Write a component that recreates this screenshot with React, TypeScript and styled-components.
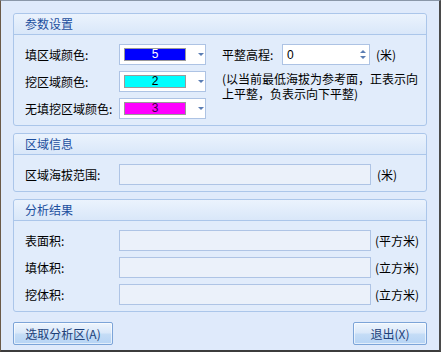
import styled, { createGlobalStyle } from 'styled-components'

const Global = createGlobalStyle`
    html, body {
        margin: 0;
        padding: 0;
        background: #dde9fa;
    }
    body {
        font-family: "Noto Sans CJK SC", "Noto Sans", sans-serif;
        font-size: 12px;
        color: #000;
    }
`

const Window = styled.div`
    width: 441px;
    height: 352px;
    box-sizing: border-box;
    border-left: 1px solid #6b5a48;
    border-top: 1px solid #8a97a8;
    border-right: 2px solid #4a4a4a;
    border-bottom: 2px solid #3c3c3c;
    background: #dfeafb;
    padding: 12px 12px 0 12px;
    display: flex;
    flex-direction: column;
    gap: 7px;
`

const Panel = styled.section`
    border: 1px solid #abc6ea;
    border-radius: 3px;
    background: #e1ecfb;
    display: flex;
    flex-direction: column;
`

const PanelHeader = styled.div`
    height: 20px;
    border-bottom: 1px solid #abc6ea;
    background: linear-gradient(#ebf3fd, #d9e7f9);
    color: #1d4f9e;
    line-height: 20px;
    padding-left: 11px;
    border-radius: 3px 3px 0 0;
`

const PanelBody = styled.div`
    padding: 9px 11px 6px 11px;
    display: flex;
    flex-direction: column;
    gap: 6px;
`

const ParamGrid = styled.div`
    display: flex;
    gap: 16px;
`

const ColorColumn = styled.div`
    display: flex;
    flex-direction: column;
    gap: 6px;
`

const Row = styled.div`
    display: flex;
    align-items: center;
    height: 21px;
`

const Label = styled.span<{ $width?: number }>`
    width: ${p => p.$width ?? 94}px;
    flex: none;
    white-space: nowrap;
`

const ColorSelect = styled.div`
    width: 87px;
    height: 21px;
    box-sizing: border-box;
    border: 1px solid #adc3e4;
    background: #fff;
    display: flex;
    align-items: center;
    padding-left: 4px;
    gap: 7px;
`

const Swatch = styled.div<{ $bg: string; $fg: string }>`
    width: 62px;
    height: 13px;
    box-sizing: border-box;
    border: 1px solid #9a9a9a;
    background: ${p => p.$bg};
    color: ${p => p.$fg};
    text-align: center;
    line-height: 11px;
    font-family: "Liberation Sans", sans-serif;
    font-size: 12px;
`

const DropArrow = styled.span`
    width: 0;
    height: 0;
    border-left: 3px solid transparent;
    border-right: 3px solid transparent;
    border-top: 3px solid #5a7db3;
    margin-left: 5px;
`

const RightColumn = styled.div`
    display: flex;
    flex-direction: column;
    gap: 6px;
`

const SpinBox = styled.div`
    width: 88px;
    height: 21px;
    box-sizing: border-box;
    border: 1px solid #adc3e4;
    background: #fff;
    display: flex;
    align-items: center;
    justify-content: space-between;
    padding: 0 3px 0 4px;
    font-family: "Liberation Sans", sans-serif;
`

const SpinArrows = styled.div`
    display: flex;
    flex-direction: column;
    gap: 3px;
`

const Tri = styled.span<{ $up?: boolean }>`
    width: 0;
    height: 0;
    border-left: 3px solid transparent;
    border-right: 3px solid transparent;
    ${p => (p.$up ? 'border-bottom: 3px solid #5a7db3;' : 'border-top: 3px solid #5a7db3;')}
`

const Unit = styled.span<{ $gap?: number }>`
    margin-left: ${p => p.$gap ?? 6}px;
    white-space: nowrap;
`

const Note = styled.div`
    display: flex;
    flex-direction: column;
`

const NoteLine = styled.span`
    line-height: 15px;
    white-space: nowrap;
`

const Field = styled.div`
    width: 252px;
    height: 21px;
    box-sizing: border-box;
    border: 1px solid #aec4e5;
    background: #ebf1fa;
    flex: none;
`

const Footer = styled.div`
    display: flex;
    justify-content: space-between;
    margin-top: 3px;
`

const Button = styled.button<{ $width: number }>`
    width: ${p => p.$width}px;
    height: 23px;
    border: 1px solid #7ca4d8;
    border-radius: 2px;
    background: linear-gradient(#eef5fd 0%, #dbe9fa 45%, #c4dcf6 55%, #b6d4f5 100%);
    color: #1d3f78;
    font-family: inherit;
    font-size: 12px;
    padding: 0;
    box-shadow: inset 0 0 0 1px rgba(255, 255, 255, 0.6);
`

const colors = [
    { label: '填区域颜色:', bg: '#0000ff', fg: '#ffffff', value: '5' },
    { label: '挖区域颜色:', bg: '#00ffff', fg: '#000000', value: '2' },
    { label: '无填挖区域颜色:', bg: '#ff00ff', fg: '#3a0040', value: '3' },
]

const results = [
    { label: '表面积:', unit: '(平方米)' },
    { label: '填体积:', unit: '(立方米)' },
    { label: '挖体积:', unit: '(立方米)' },
]

export default function App() {
    return (
        <Window>
            <Global />
            <Panel>
                <PanelHeader>参数设置</PanelHeader>
                <PanelBody>
                    <ParamGrid>
                        <ColorColumn>
                            {colors.map(c => (
                                <Row key={c.label}>
                                    <Label>{c.label}</Label>
                                    <ColorSelect>
                                        <Swatch $bg={c.bg} $fg={c.fg}>{c.value}</Swatch>
                                        <DropArrow />
                                    </ColorSelect>
                                </Row>
                            ))}
                        </ColorColumn>
                        <RightColumn>
                            <Row>
                                <Label $width={60}>平整高程:</Label>
                                <SpinBox>
                                    <span>0</span>
                                    <SpinArrows>
                                        <Tri $up />
                                        <Tri />
                                    </SpinArrows>
                                </SpinBox>
                                <Unit>(米)</Unit>
                            </Row>
                            <Note>
                                <NoteLine>(以当前最低海拔为参考面，正表示向</NoteLine>
                                <NoteLine>上平整，负表示向下平整)</NoteLine>
                            </Note>
                        </RightColumn>
                    </ParamGrid>
                </PanelBody>
            </Panel>
            <Panel>
                <PanelHeader>区域信息</PanelHeader>
                <PanelBody>
                    <Row>
                        <Label>区域海拔范围:</Label>
                        <Field />
                        <Unit>(米)</Unit>
                    </Row>
                </PanelBody>
            </Panel>
            <Panel>
                <PanelHeader>分析结果</PanelHeader>
                <PanelBody>
                    {results.map(r => (
                        <Row key={r.label}>
                            <Label>{r.label}</Label>
                            <Field />
                            <Unit $gap={4}>{r.unit}</Unit>
                        </Row>
                    ))}
                </PanelBody>
            </Panel>
            <Footer>
                <Button $width={100}>选取分析区(A)</Button>
                <Button $width={74}>退出(X)</Button>
            </Footer>
        </Window>
    )
}
